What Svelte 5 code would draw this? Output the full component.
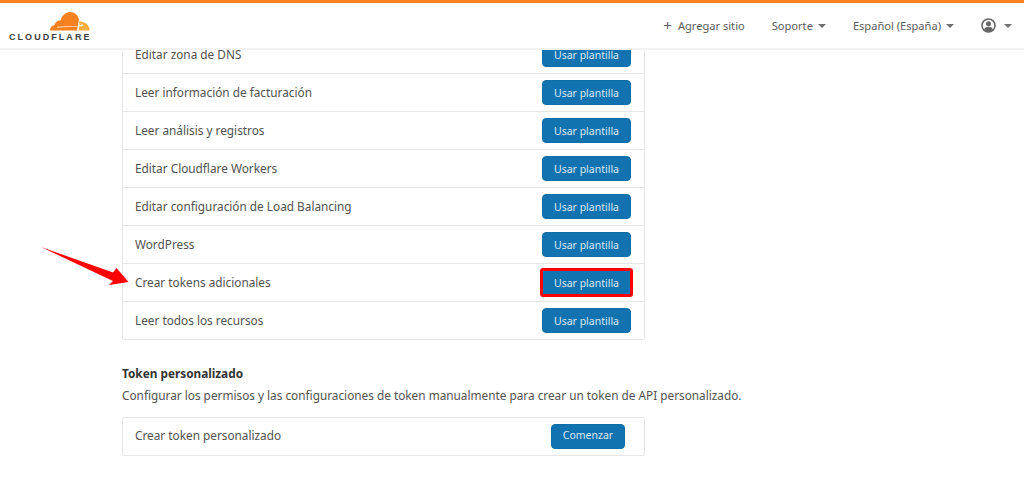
<script>
	const templates = [
		'Editar zona de DNS',
		'Leer información de facturación',
		'Leer análisis y registros',
		'Editar Cloudflare Workers',
		'Editar configuración de Load Balancing',
		'WordPress',
		'Crear tokens adicionales',
		'Leer todos los recursos'
	];
	const highlighted = 'Crear tokens adicionales';
</script>

<div class="page">
	<header class="topbar">
		<div class="logo">
			<svg class="cloud" width="40" height="19" viewBox="0 0 40 19" aria-hidden="true">
				<path fill="#f6821f" d="M0 18.500C0 15.500 2 13.500 4.500 13 5.500 9.500 8 8 10.500 8.500 12 3.500 16 0 20 0c4.500 0 8 3 9 7.500l-.8 4-1 6.500-.2.500z"/>
				<path fill="#fbad41" d="M29 9.500c5.500-.6 10.500 3 10.800 9H28.300c.8-2.300 1.200-3.800 1.200-5.500 0-1.300-.2-2.300-.5-3.500z"/>
				<path fill="#fff" d="M7 14.800l21-.7 3-1.100 1.500-1.500.2 1.400 1.300.4-1.800.5-.6 1.500-.5-1.300-2.800.6L7 15.500z"/>
			</svg>
			<span class="wordmark">CLOUDFLARE</span>
		</div>
		<nav class="nav">
			<span class="nav-item add"><span class="plus">+</span> Agregar sitio</span>
			<span class="nav-item">Soporte <i class="caret"></i></span>
			<span class="nav-item">Español (España) <i class="caret"></i></span>
			<span class="nav-item user">
				<svg width="15" height="15" viewBox="0 0 15 15" aria-hidden="true">
					<circle cx="7.500" cy="7.500" r="6.500" fill="none" stroke="#666" stroke-width="1.600"/>
					<circle cx="7.500" cy="5.800" r="2.500" fill="#666"/>
					<path fill="#666" d="M3 11.500c.8-2 2.500-2.700 4.500-2.700s3.700.7 4.500 2.700c-1.200 1.200-2.700 1.900-4.500 1.900S4.200 12.700 3 11.500z"/>
				</svg>
				<i class="caret"></i>
			</span>
		</nav>
	</header>

	<main class="content">
		<section class="card">
			{#each templates as name}
				<div class="row">
					<span class="label">{name}</span>
					<button class="btn" class:marked={name === highlighted}>Usar plantilla</button>
				</div>
			{/each}
		</section>

		<h2>Token personalizado</h2>
		<p>Configurar los permisos y las configuraciones de token manualmente para crear un token de API personalizado.</p>

		<section class="card">
			<div class="row custom">
				<span class="label">Crear token personalizado</span>
				<button class="btn start">Comenzar</button>
			</div>
		</section>
	</main>

	<!-- annotation drawn over the screenshot -->
	<svg class="arrow" width="96" height="50" viewBox="0 0 96 50" aria-hidden="true">
		<path fill="#f00" d="M1 1L73 26.500 76.500 22 88.500 36 69 39 73 35z"/>
	</svg>
</div>

<style>
	:global(body) {
		margin: 0;
		background: #fff;
	}

	.page {
		position: relative;
		height: 482px;
		overflow: hidden;
		font-family: "Noto Sans", "Open Sans", sans-serif;
		font-size: 11.800px;
		color: #525252;
	}

	.topbar {
		position: relative;
		z-index: 1;
		box-sizing: border-box;
		height: 50px;
		display: flex;
		align-items: center;
		justify-content: space-between;
		padding: 0 12px 0 9px;
		background: #fff;
		border-top: 3px solid #f6821f;
		border-bottom: 2px solid #f2f2f2;
	}

	.logo {
		display: flex;
		flex-direction: column;
		align-items: flex-start;
		width: 82px;
		margin-top: 2px;
	}

	.cloud {
		margin: 0 0 2px 41px;
	}

	.wordmark {
		font-family: "Liberation Sans", sans-serif;
		font-weight: 700;
		font-size: 9px;
		line-height: 9px;
		letter-spacing: 2.050px;
		color: #404041;
		white-space: nowrap;
	}

	.nav {
		display: flex;
		align-items: center;
		gap: 27px;
		color: #5c5c5c;
		font-size: 11.100px;
	}

	.nav-item {
		display: flex;
		align-items: center;
		gap: 5px;
	}

	.plus {
		font-size: 15px;
		line-height: 1;
		margin-right: 1px;
	}

	.user {
		gap: 8px;
	}

	.caret {
		width: 0;
		height: 0;
		border-left: 4px solid transparent;
		border-right: 4px solid transparent;
		border-top: 4px solid #707070;
	}

	.content {
		width: 523px;
		margin: -15px 0 0 122px;
	}

	.card {
		box-sizing: border-box;
		border: 1px solid #e6e6e6;
		border-radius: 2px;
		background: #fff;
	}

	.row {
		box-sizing: border-box;
		height: 38px;
		display: flex;
		align-items: center;
		justify-content: space-between;
		padding: 0 13px 0 12px;
		border-bottom: 1px solid #e6e6e6;
	}

	.row:last-child {
		height: 37px;
		border-bottom: 0;
	}

	.row.custom {
		padding-right: 19px;
		padding-bottom: 1px;
	}

	.label {
		margin-bottom: 2px;
	}

	.btn {
		box-sizing: border-box;
		width: 89px;
		height: 25px;
		padding: 0;
		border: 1px solid #0f6ea6;
		border-radius: 4px;
		background: #1273b0;
		color: #d9e8f2;
		font: inherit;
		font-size: 10.500px;
	}

	.btn.marked {
		outline: 3px solid #f00;
		outline-offset: -1px;
		border-radius: 1px;
	}

	.btn.start {
		width: 74px;
		padding-bottom: 2px;
	}

	h2 {
		margin: 25px 0 0;
		font-size: 11.800px;
		font-weight: 700;
		line-height: 16px;
		color: #333;
	}

	p {
		margin: 5px 0 13px;
		line-height: 18px;
		white-space: nowrap;
	}

	.arrow {
		position: absolute;
		left: 40px;
		top: 246px;
	}
</style>
